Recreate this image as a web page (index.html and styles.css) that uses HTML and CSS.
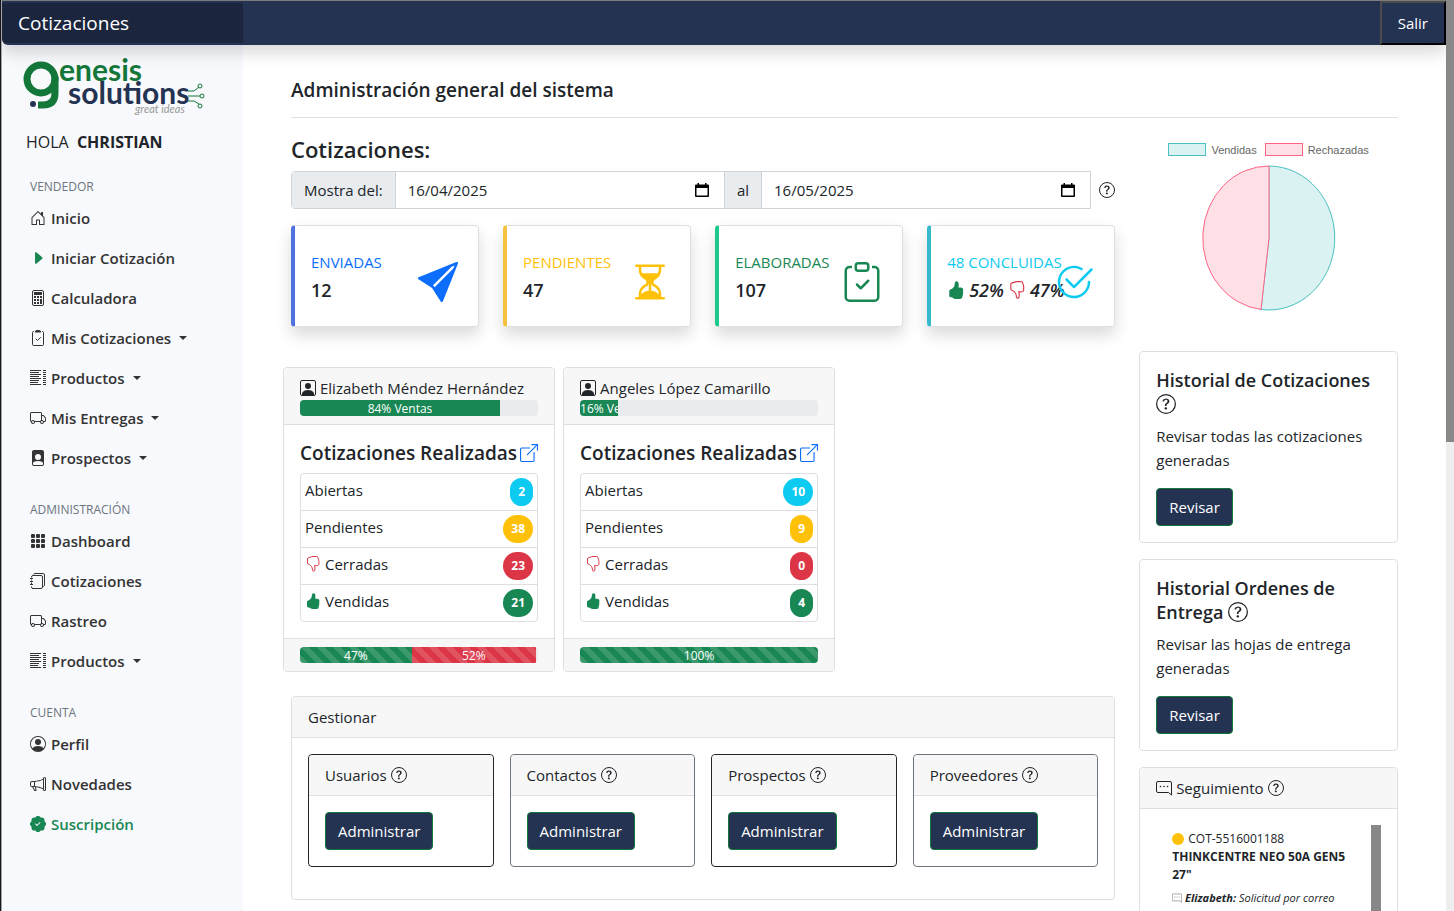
FILE: index.html
```html
<!DOCTYPE html>
<html lang="es">
<head>
  <meta charset="UTF-8" />
  <meta name="viewport" content="width=device-width, initial-scale=1.0" />
  <title>Cotizaciones</title>
  <link rel="stylesheet" href="styles.css">
</head>
<body>
  <!-- Icons -->
  <svg class="sprite" aria-hidden="true">
    <symbol id="house" viewBox="0 0 16 16"><path d="M8.354 1.146a.5.5 0 0 0-.708 0l-6 6A.5.5 0 0 0 1.5 7.5v7a.5.5 0 0 0 .5.5h4.500a.5.5 0 0 0 .5-.5v-4h2v4a.5.5 0 0 0 .5.5H14a.5.5 0 0 0 .5-.5v-7a.5.5 0 0 0-.146-.354L13 5.793V2.500a.5.5 0 0 0-.5-.5h-1a.5.5 0 0 0-.5.5v1.293L8.354 1.146zM2.500 14V7.707l5.500-5.500 5.500 5.500V14H10v-4a.5.5 0 0 0-.5-.5h-3a.5.5 0 0 0-.5.5v4H2.500z"/></symbol>
    <symbol id="caret" viewBox="0 0 16 16"><path d="m12.140 8.753-5.482 4.796c-.646.566-1.658.106-1.658-.753V3.204a1 1 0 0 1 1.659-.753l5.480 4.796a1 1 0 0 1 0 1.506z"/></symbol>
    <symbol id="calculator" viewBox="0 0 16 16"><rect x="2.500" y=".5" width="11" height="15" rx="1.500" fill="none" stroke="currentColor"/><path d="M4 2h8v3H4zM4 6h2v2H4zM7 6h2v2H7zM10 6h2v2h-2zM4 9h2v2H4zM7 9h2v2H7zM10 9h2v5h-2zM4 12h2v2H4zM7 12h2v2H7z"/></symbol>
    <symbol id="clipboard-small" viewBox="0 0 16 16"><path d="M4 1.500h-.5a1 1 0 0 0-1 1v12a1 1 0 0 0 1 1h9a1 1 0 0 0 1-1v-12a1 1 0 0 0-1-1H12" fill="none" stroke="currentColor"/><path d="M5 1.500A1 1 0 0 1 6 .5a2.500 2.500 0 0 1 4 0 1 1 0 0 1 1 1V2.500H5z"/><path d="m6 9 1.500 1.500 3-3" fill="none" stroke="currentColor" stroke-linecap="round"/></symbol>
    <symbol id="clipboard" viewBox="0 0 16 16"><path d="M10.854 7.146a.5.5 0 0 1 0 .708l-3 3a.5.5 0 0 1-.708 0l-1.500-1.500a.5.5 0 1 1 .708-.708L7.500 9.793l2.646-2.647a.5.5 0 0 1 .708 0z"/><path d="M4 1.500H3a2 2 0 0 0-2 2V14a2 2 0 0 0 2 2h10a2 2 0 0 0 2-2V3.500a2 2 0 0 0-2-2h-1v1h1a1 1 0 0 1 1 1V14a1 1 0 0 1-1 1H3a1 1 0 0 1-1-1V3.500a1 1 0 0 1 1-1h1v-1z"/><path d="M9.500 1a.5.5 0 0 1 .5.5v1a.5.5 0 0 1-.5.5h-3a.5.5 0 0 1-.5-.5v-1a.5.5 0 0 1 .5-.5h3zm-3-1A1.500 1.500 0 0 0 5 1.500v1A1.500 1.500 0 0 0 6.500 4h3A1.500 1.500 0 0 0 11 2.500v-1A1.500 1.500 0 0 0 9.500 0h-3z"/></symbol>
    <symbol id="lines" viewBox="0 0 16 16"><path d="M0 .5h11M0 2.500h9M0 4.500h11M0 6.500h9M0 8.500h11M0 10.500h9M0 12.500h8M0 14.500h11M13 .5h3M13 2.500h3M13 4.500h3M13 6.500h3M13 8.500h3M13 10.500h3M13 12.500h3M13 14.500h3" fill="none" stroke="currentColor"/></symbol>
    <symbol id="truck" viewBox="0 0 16 16"><path d="M0 3.500A1.500 1.500 0 0 1 1.500 2h9A1.500 1.500 0 0 1 12 3.500V5h1.020a1.500 1.500 0 0 1 1.170.563l1.481 1.850a1.500 1.500 0 0 1 .329.938V10.500a1.500 1.500 0 0 1-1.500 1.500H14a2 2 0 1 1-4 0H5a2 2 0 1 1-3.998-.085A1.500 1.500 0 0 1 0 10.500v-7zm1.294 7.456A1.999 1.999 0 0 1 4.732 11h5.536a2.010 2.010 0 0 1 .732-.732V3.500a.5.5 0 0 0-.5-.5h-9a.5.5 0 0 0-.5.5v7a.5.5 0 0 0 .294.456zM12 10a2 2 0 0 1 1.732 1h.768a.5.5 0 0 0 .5-.5V8.350a.5.5 0 0 0-.110-.312l-1.480-1.850A.5.5 0 0 0 13.020 6H12v4zm-9 1a1 1 0 1 0 0 2 1 1 0 0 0 0-2zm9 0a1 1 0 1 0 0 2 1 1 0 0 0 0-2z"/></symbol>
    <symbol id="file-person" viewBox="0 0 16 16"><path d="M12 0H4a2 2 0 0 0-2 2v12a2 2 0 0 0 2 2h8a2 2 0 0 0 2-2V2a2 2 0 0 0-2-2zm-1 7a3 3 0 1 1-6 0 3 3 0 0 1 6 0zm-3 4c2.623 0 4.146.826 5 1.755V14a1 1 0 0 1-1 1H4a1 1 0 0 1-1-1v-1.245C3.854 11.825 5.377 11 8 11z"/></symbol>
    <symbol id="grid" viewBox="0 0 16 16"><rect x="1" y="1" width="4" height="4" rx="1"/><rect x="6" y="1" width="4" height="4" rx="1"/><rect x="11" y="1" width="4" height="4" rx="1"/><rect x="1" y="6" width="4" height="4" rx="1"/><rect x="6" y="6" width="4" height="4" rx="1"/><rect x="11" y="6" width="4" height="4" rx="1"/><rect x="1" y="11" width="4" height="4" rx="1"/><rect x="6" y="11" width="4" height="4" rx="1"/><rect x="11" y="11" width="4" height="4" rx="1"/></symbol>
    <symbol id="journals" viewBox="0 0 16 16"><path d="M1.500 4.500V4a1.500 1.500 0 0 1 1.500-1.500h8A1.500 1.500 0 0 1 12.500 4v10a1.500 1.500 0 0 1-1.500 1.500H3A1.500 1.500 0 0 1 1.500 14v-.5M1.500 6.500v1M1.500 9.500v1.500M0 5.500h3M0 8.500h3M0 11.500h3M3.500 1.500c.2-.6.700-1 1.500-1h8A1.500 1.500 0 0 1 14.500 2v10c0 .8-.5 1.500-1.500 1.500" fill="none" stroke="currentColor"/></symbol>
    <symbol id="person-circle" viewBox="0 0 16 16"><path d="M11 6a3 3 0 1 1-6 0 3 3 0 0 1 6 0z"/><path fill-rule="evenodd" d="M0 8a8 8 0 1 1 16 0A8 8 0 0 1 0 8zm8-7a7 7 0 0 0-5.468 11.370C3.242 11.226 4.805 10 8 10s4.757 1.225 5.468 2.370A7 7 0 0 0 8 1z"/></symbol>
    <symbol id="megaphone" viewBox="0 0 16 16"><path d="M13 2.500a1.500 1.500 0 0 1 3 0v11a1.500 1.500 0 0 1-3 0v-.214c-2.162-1.241-4.490-1.843-6.912-2.083l.405 2.712A1 1 0 0 1 5.510 15.100h-.548a1 1 0 0 1-.916-.599l-1.850-3.490a68.140 68.140 0 0 0-.202-.003A2.014 2.014 0 0 1 0 9V7a2.020 2.020 0 0 1 1.992-2.013 74.663 74.663 0 0 0 2.483-.075c3.043-.154 6.148-.849 8.525-2.199V2.500zm1 0v11a.5.5 0 0 0 1 0v-11a.5.5 0 0 0-1 0zm-1 1.350c-2.344 1.205-5.209 1.842-8 2.033v4.233c.180.010.359.022.537.036 2.568.189 5.093.744 7.463 1.993V3.850zm-9 6.215v-4.130a95.090 95.090 0 0 1-1.992.052A1.020 1.020 0 0 0 1 7v2c0 .550.448 1.002 1.006 1.009A60.490 60.490 0 0 1 4 10.065zm-.657.975 1.609 3.037.010.024h.548l-.002-.014-.443-2.966a68.019 68.019 0 0 0-1.722-.082z"/></symbol>
    <symbol id="patch" viewBox="0 0 16 16"><path d="M10.067.870a2.890 2.890 0 0 0-4.134 0l-.622.638-.890-.011a2.890 2.890 0 0 0-2.924 2.924l.010.890-.636.622a2.890 2.890 0 0 0 0 4.134l.637.622-.011.890a2.890 2.890 0 0 0 2.924 2.924l.890-.010.622.636a2.890 2.890 0 0 0 4.134 0l.622-.637.890.011a2.890 2.890 0 0 0 2.924-2.924l-.010-.890.636-.622a2.890 2.890 0 0 0 0-4.134l-.637-.622.011-.890a2.890 2.890 0 0 0-2.924-2.924l-.890.010-.622-.636zm.287 5.984-3 3a.5.5 0 0 1-.708 0l-1.500-1.500a.5.5 0 1 1 .708-.708L7 8.793l2.646-2.647a.5.5 0 0 1 .708.708z"/></symbol>
    <symbol id="help" viewBox="0 0 16 16"><circle cx="8" cy="8" r="7.500" fill="none" stroke="currentColor"/><path d="M5.255 5.786a.237.237 0 0 0 .241.247h.825c.138 0 .248-.113.266-.250.090-.656.540-1.134 1.342-1.134.686 0 1.314.343 1.314 1.168 0 .635-.374.927-.965 1.371-.673.489-1.206 1.060-1.168 1.987l.003.217a.250.250 0 0 0 .250.246h.811a.250.250 0 0 0 .250-.250v-.105c0-.718.273-.927 1.010-1.486.609-.463 1.244-.977 1.244-2.056 0-1.511-1.276-2.241-2.673-2.241-1.267 0-2.655.590-2.750 2.286zm1.557 5.763c0 .533.425.927 1.010.927.609 0 1.028-.394 1.028-.927 0-.552-.420-.940-1.029-.940-.584 0-1.009.388-1.009.940z"/></symbol>
    <symbol id="send" viewBox="0 0 16 16"><path d="M15.964.686a.5.5 0 0 0-.650-.650L.767 5.855H.766l-.452.180a.5.5 0 0 0-.082.887l.410.260.001.002 4.995 3.178 3.178 4.995.002.002.260.410a.5.5 0 0 0 .886-.083l6-15Zm-1.833 1.890L6.637 10.070l-.215-.338a.5.5 0 0 0-.154-.154l-.338-.215 7.494-7.494 1.178-.471-.470 1.178Z"/></symbol>
    <symbol id="hourglass" viewBox="0 0 16 16"><path d="M2.500 15a.5.5 0 1 1 0-1h1v-1a4.500 4.500 0 0 1 2.557-4.060c.290-.139.443-.377.443-.590v-.7c0-.213-.154-.451-.443-.590A4.500 4.500 0 0 1 3.500 3V2h-1a.5.5 0 0 1 0-1h11a.5.5 0 0 1 0 1h-1v1a4.500 4.500 0 0 1-2.557 4.060c-.290.139-.443.377-.443.590v.7c0 .213.154.451.443.590A4.500 4.500 0 0 1 12.500 13v1h1a.5.5 0 0 1 0 1h-11zm2-13v1c0 .537.120 1.045.337 1.500h6.326c.216-.455.337-.963.337-1.500V2h-7zm3 6.350c0 .701-.478 1.236-1.011 1.492A3.500 3.500 0 0 0 4.500 13s.866-1.299 3-1.480V8.350zm1 0v3.170c2.134.181 3 1.480 3 1.480a3.500 3.500 0 0 0-1.989-3.158C8.978 9.586 8.500 9.052 8.500 8.351z"/></symbol>
    <symbol id="check-circle" viewBox="0 0 16 16"><path d="M2.500 8a5.500 5.500 0 0 1 8.250-4.764.5.5 0 0 0 .5-.866A6.500 6.500 0 1 0 14.500 8a.5.5 0 0 0-1 0 5.500 5.500 0 1 1-11 0z"/><path d="M15.354 3.354a.5.5 0 0 0-.708-.708L8 9.293 5.354 6.646a.5.5 0 1 0-.708.708l3 3a.5.5 0 0 0 .708 0l7-7z"/></symbol>
    <symbol id="thumb-up" viewBox="0 0 16 16"><path d="M6.956 1.745C7.021.810 7.908.087 8.864.325l.261.066c.463.116.874.456 1.012.965.220.816.533 2.511.062 4.510a9.840 9.840 0 0 1 .443-.051c.713-.065 1.669-.072 2.516.210.518.173.994.681 1.200 1.273.184.532.160 1.162-.234 1.733.058.119.103.242.138.363.077.270.113.567.113.856 0 .289-.036.586-.113.856-.039.135-.090.273-.160.404.169.387.107.819-.003 1.148a3.163 3.163 0 0 1-.488.901c.054.152.076.312.076.465 0 .305-.089.625-.253.912C13.100 15.522 12.437 16 11.500 16H8c-.605 0-1.070-.081-1.466-.218a4.826 4.826 0 0 1-.970-.484l-.048-.030c-.504-.307-.999-.609-2.068-.722C2.682 14.464 2 13.846 2 13V9c0-.850.685-1.432 1.357-1.616.849-.231 1.574-.786 2.132-1.410.560-.626.914-1.279 1.039-1.638.199-.575.356-1.540.428-2.590z"/></symbol>
    <symbol id="thumb-down" viewBox="0 0 16 16"><path d="M8.800 15.200c.6-.1 1-.5 1-1 .3-1.500.3-2.800-.2-4.700 1.200.2 2.300.2 3.300-.1 1-.4 1.300-1.500.8-2.400.5-.7.400-1.500 0-2.100.3-.8.1-1.500-.5-2.100.1-1.300-.5-2.200-1.700-2.300H8c-1.900 0-2.100.9-4.500 1.200-.6.100-1 .6-1 1.300v4c0 .6.400 1 1 1.200 1.900.5 3.100 2.200 3.600 3.500.3.900.3 2 .4 2.700.1.500.7.900 1.300.8z" fill="none" stroke="currentColor"/></symbol>
    <symbol id="person-square" viewBox="0 0 16 16"><rect x=".5" y=".5" width="15" height="15" rx="1.500" fill="none" stroke="currentColor"/><circle cx="8" cy="6" r="3"/><path d="M2 15v-1c0-1 1-4 6-4s6 3 6 4v1z"/></symbol>
    <symbol id="external" viewBox="0 0 16 16"><path d="M8.500 3.500h-7a1 1 0 0 0-1 1v10a1 1 0 0 0 1 1h10a1 1 0 0 0 1-1v-7M10.500.5h5v5M15.500.5 6.500 9.500" fill="none" stroke="currentColor" stroke-linecap="round" stroke-linejoin="round"/></symbol>
    <symbol id="chat" viewBox="0 0 16 16"><path d="M2 1.500h12A1.500 1.500 0 0 1 15.500 3v12l-3-2.500H2A1.500 1.500 0 0 1 .5 11V3A1.500 1.500 0 0 1 2 1.500z" fill="none" stroke="currentColor" stroke-linejoin="round"/><circle cx="4.500" cy="6.500" r=".8"/><circle cx="8" cy="6.500" r=".8"/><circle cx="11.500" cy="6.500" r=".8"/></symbol>
    <symbol id="calendar" viewBox="0 0 16 16"><path fill-rule="evenodd" d="M3.500 1H5v1.500h6V1h1.500v1.500H14a1 1 0 0 1 1 1V14a1 1 0 0 1-1 1H2a1 1 0 0 1-1-1V3.500a1 1 0 0 1 1-1h1.500zM2.500 6v7.500h11V6z"/></symbol>
  </svg>

  <div class="page">
    <header class="navbar">
      <a class="brand" href="#">Cotizaciones</a>
      <button class="logout" type="button">Salir</button>
    </header>

    <div class="layout">
      <nav class="sidebar">
        <svg class="logo" viewBox="0 0 184 56" role="img" aria-label="Genesis Solutions, great ideas">
          <g fill="none" stroke="#14773a" stroke-width="7">
            <circle cx="18" cy="19" r="14"/>
            <path d="M32 17v16q0 12-12 12h-5"/>
          </g>
          <circle cx="10" cy="44" r="3" fill="#253353"/>
          <text class="logo-top" x="36" y="21">enesis</text>
          <text class="logo-mid" x="45" y="44">solutions</text>
          <text class="logo-tag" x="112" y="53">great ideas</text>
          <g fill="none" stroke="#14773a">
            <path d="M165 31h6l5-4M165 36h12M165 41h6l5 3"/>
            <circle cx="177" cy="26" r="2"/>
            <circle cx="179" cy="36" r="2"/>
            <circle cx="177" cy="46" r="2"/>
          </g>
        </svg>
        <p class="hello">HOLA <b>CHRISTIAN</b></p>

        <h6>VENDEDOR</h6>
        <ul>
          <li><a href="#"><svg class="icon"><use href="#house"/></svg>Inicio</a></li>
          <li><a href="#"><svg class="icon green"><use href="#caret"/></svg>Iniciar Cotización</a></li>
          <li><a href="#"><svg class="icon"><use href="#calculator"/></svg>Calculadora</a></li>
          <li><a class="dropdown" href="#"><svg class="icon"><use href="#clipboard-small"/></svg>Mis Cotizaciones</a></li>
          <li><a class="dropdown" href="#"><svg class="icon"><use href="#lines"/></svg>Productos</a></li>
          <li><a class="dropdown" href="#"><svg class="icon"><use href="#truck"/></svg>Mis Entregas</a></li>
          <li><a class="dropdown" href="#"><svg class="icon"><use href="#file-person"/></svg>Prospectos</a></li>
        </ul>

        <h6>ADMINISTRACIÓN</h6>
        <ul>
          <li><a href="#"><svg class="icon"><use href="#grid"/></svg>Dashboard</a></li>
          <li><a href="#"><svg class="icon"><use href="#journals"/></svg>Cotizaciones</a></li>
          <li><a href="#"><svg class="icon"><use href="#truck"/></svg>Rastreo</a></li>
          <li><a class="dropdown" href="#"><svg class="icon"><use href="#lines"/></svg>Productos</a></li>
        </ul>

        <h6>CUENTA</h6>
        <ul>
          <li><a href="#"><svg class="icon"><use href="#person-circle"/></svg>Perfil</a></li>
          <li><a href="#"><svg class="icon"><use href="#megaphone"/></svg>Novedades</a></li>
          <li><a class="green" href="#"><svg class="icon"><use href="#patch"/></svg>Suscripción</a></li>
        </ul>
      </nav>

      <main>
        <h1>Administración general del sistema</h1>

        <div class="row">
          <div class="col-main">
            <h2>Cotizaciones:</h2>
            <div class="dates">
              <div class="input-group">
                <label for="from">Mostra del:</label>
                <div class="date"><input type="text" id="from" value="16/04/2025"><svg class="icon"><use href="#calendar"/></svg></div>
                <label for="to">al</label>
                <div class="date"><input type="text" id="to" value="16/05/2025"><svg class="icon"><use href="#calendar"/></svg></div>
              </div>
              <svg class="icon"><use href="#help"/></svg>
            </div>

            <div class="stats">
              <div class="stat blue">
                <div><p>ENVIADAS</p><strong>12</strong></div>
                <svg class="icon"><use href="#send"/></svg>
              </div>
              <div class="stat yellow">
                <div><p>PENDIENTES</p><strong>47</strong></div>
                <svg class="icon"><use href="#hourglass"/></svg>
              </div>
              <div class="stat teal">
                <div><p>ELABORADAS</p><strong>107</strong></div>
                <svg class="icon"><use href="#clipboard"/></svg>
              </div>
              <div class="stat cyan">
                <div>
                  <p>48 CONCLUIDAS</p>
                  <strong class="rates"><svg class="icon green"><use href="#thumb-up"/></svg><i>52%</i><svg class="icon red"><use href="#thumb-down"/></svg><i>47%</i></strong>
                </div>
                <svg class="icon"><use href="#check-circle"/></svg>
              </div>
            </div>

            <div class="sellers">
              <div class="card">
                <div class="card-header">
                  <div class="seller-name"><svg class="icon"><use href="#person-square"/></svg>Elizabeth Méndez Hernández</div>
                  <div class="progress"><div class="bar" style="width: 84%">84% Ventas</div></div>
                </div>
                <div class="card-body">
                  <h5>Cotizaciones Realizadas <a href="#" aria-label="Abrir"><svg class="icon"><use href="#external"/></svg></a></h5>
                  <ul class="list">
                    <li>Abiertas <span class="badge bg-cyan">2</span></li>
                    <li>Pendientes <span class="badge bg-yellow">38</span></li>
                    <li><svg class="icon red"><use href="#thumb-down"/></svg>Cerradas <span class="badge bg-red">23</span></li>
                    <li><svg class="icon green"><use href="#thumb-up"/></svg>Vendidas <span class="badge bg-green">21</span></li>
                  </ul>
                </div>
                <div class="card-footer">
                  <div class="progress">
                    <div class="bar striped" style="width: 47%">47%</div>
                    <div class="bar striped bg-red" style="width: 52%">52%</div>
                  </div>
                </div>
              </div>
              <div class="card">
                <div class="card-header">
                  <div class="seller-name"><svg class="icon"><use href="#person-square"/></svg>Angeles López Camarillo</div>
                  <div class="progress"><div class="bar" style="width: 16%">16% Ventas</div></div>
                </div>
                <div class="card-body">
                  <h5>Cotizaciones Realizadas <a href="#" aria-label="Abrir"><svg class="icon"><use href="#external"/></svg></a></h5>
                  <ul class="list">
                    <li>Abiertas <span class="badge bg-cyan">10</span></li>
                    <li>Pendientes <span class="badge bg-yellow">9</span></li>
                    <li><svg class="icon red"><use href="#thumb-down"/></svg>Cerradas <span class="badge bg-red">0</span></li>
                    <li><svg class="icon green"><use href="#thumb-up"/></svg>Vendidas <span class="badge bg-green">4</span></li>
                  </ul>
                </div>
                <div class="card-footer">
                  <div class="progress"><div class="bar striped" style="width: 100%">100%</div></div>
                </div>
              </div>
            </div>

            <div class="card">
              <div class="card-header">Gestionar</div>
              <div class="card-body manage">
                <div class="card dark">
                  <div class="card-header">Usuarios <svg class="icon"><use href="#help"/></svg></div>
                  <div class="card-body"><button class="btn" type="button">Administrar</button></div>
                </div>
                <div class="card gray">
                  <div class="card-header">Contactos <svg class="icon"><use href="#help"/></svg></div>
                  <div class="card-body"><button class="btn" type="button">Administrar</button></div>
                </div>
                <div class="card dark">
                  <div class="card-header">Prospectos <svg class="icon"><use href="#help"/></svg></div>
                  <div class="card-body"><button class="btn" type="button">Administrar</button></div>
                </div>
                <div class="card gray">
                  <div class="card-header">Proveedores <svg class="icon"><use href="#help"/></svg></div>
                  <div class="card-body"><button class="btn" type="button">Administrar</button></div>
                </div>
              </div>
            </div>
          </div>

          <div class="col-side">
            <div class="chart">
              <div class="legend">
                <span><i class="key sold"></i>Vendidas</span>
                <span><i class="key lost"></i>Rechazadas</span>
              </div>
              <svg class="pie" viewBox="0 0 134 146">
                <path d="M67 73V1A66 72 0 1 1 59 144.500z" fill="#dbf2f2" stroke="#4bc0c0"/>
                <path d="M67 73V1A66 72 0 0 0 59 144.500z" fill="#ffe0e6" stroke="#ff6384"/>
              </svg>
            </div>

            <div class="card">
              <div class="card-body">
                <h5>Historial de Cotizaciones <svg class="icon"><use href="#help"/></svg></h5>
                <p>Revisar todas las cotizaciones generadas</p>
                <button class="btn" type="button">Revisar</button>
              </div>
            </div>
            <div class="card">
              <div class="card-body">
                <h5>Historial Ordenes de Entrega <svg class="icon"><use href="#help"/></svg></h5>
                <p>Revisar las hojas de entrega generadas</p>
                <button class="btn" type="button">Revisar</button>
              </div>
            </div>
            <div class="card">
              <div class="card-header"><svg class="icon"><use href="#chat"/></svg> Seguimiento <svg class="icon"><use href="#help"/></svg></div>
              <div class="card-body follow">
                <div class="follow-item">
                  <div class="code"><span class="dot"></span>COT-5516001188</div>
                  <b>THINKCENTRE NEO 50A GEN5 27"</b>
                  <em><svg class="icon"><use href="#chat"/></svg> <b>Elizabeth:</b> Solicitud por correo</em>
                </div>
                <div class="follow-scroll"></div>
              </div>
            </div>
          </div>
        </div>
      </main>
    </div>
  </div>
  <div class="scrollbar"><div class="thumb"></div></div>
</body>
</html>
```
FILE: styles.css
```css
* { box-sizing: border-box; }
body {
  margin: 0;
  height: 100vh;
  display: flex;
  overflow: hidden;
  border-left: 1px solid #16161c;
  font-family: "Open Sans", "Noto Sans", sans-serif;
  font-size: 15px;
  line-height: 24px;
  color: #212529;
}
h1, h2, h5, h6, p, ul { margin: 0; padding: 0; font-weight: 600; }
p { font-weight: 400; }
ul { list-style: none; font-weight: 400; }
a { color: #0d6efd; text-decoration: none; }
button, input { font: inherit; }

.sprite { position: absolute; width: 0; height: 0; }
.icon { width: 16px; height: 16px; flex: none; fill: currentColor; vertical-align: -2px; }
.green { color: #198754; }
.red { color: #dc3545; }
.bg-cyan { background-color: #0dcaf0; }
.bg-yellow { background-color: #ffc107; }
.bg-red { background-color: #dc3545; }
.bg-green { background-color: #198754; }

.page {
  flex: 1;
  min-width: 0;
  display: flex;
  flex-direction: column;
  border-left: 1px solid #a5a5a5;
  border-top: 1px solid #7c7c7c;
  overflow: hidden;
}
.scrollbar { width: 8px; background: #eee; }
.thumb { height: 442px; background: #888; }

/* Top bar */
.navbar {
  position: relative;
  z-index: 1;
  display: flex;
  flex: none;
  justify-content: space-between;
  height: 44px;
  background: #253353;
  border-radius: 0 0 0 6px;
  box-shadow: 0 8px 16px rgba(0, 0, 0, .15);
}
.brand {
  width: 241px;
  margin: 2px 0;
  padding: 0 16px;
  background: rgba(0, 0, 0, .25);
  border-radius: 0 0 0 4px;
  color: #fff;
  font-size: 19px;
  line-height: 40px;
}
.logout {
  padding: 0 16px;
  background: #253353;
  border: 2px solid #000;
  border-top-color: #4c4c4c;
  border-left-color: #4c4c4c;
  color: #fff;
  font-weight: 500;
}

.layout { display: flex; flex: 1; min-height: 0; }

/* Sidebar */
.sidebar { flex: none; width: 241px; padding: 15px 28px; background: #f8f9fc; }
.logo { display: block; width: 184px; height: 56px; margin-left: -7px; overflow: visible; }
.logo text { font-family: Lato, sans-serif; }
.logo-top { font-size: 30px; font-weight: 700; fill: #14773a; }
.logo-mid { font-size: 30px; font-weight: 700; fill: #253353; }
.logo-tag { font-size: 11px; font-style: italic; fill: #999; }
.hello { margin: 14px -4px 23px; font-size: 16px; }
.hello b { margin-left: 4px; }
.sidebar h6 { margin-bottom: 1px; font-size: 12px; line-height: 20px; font-weight: 400; color: #6c757d; }
.sidebar ul { margin-bottom: 22px; }
.sidebar li a { display: flex; align-items: center; gap: 5px; height: 40px; color: #333; font-weight: 600; white-space: nowrap; }
.sidebar li a.green { color: #198754; }
.sidebar .icon.green { color: #198754; }
.dropdown::after { content: ""; margin-left: 3px; border: 4px solid transparent; border-top-color: #333; border-bottom: 0; }

/* Content */
main { flex: 1; min-width: 0; padding: 33px 48px 0; }
h1 { padding-bottom: 15px; margin-bottom: 16px; border-bottom: 1px solid #dee2e6; font-size: 19px; }
h2 { margin-bottom: 7px; font-size: 22px; line-height: 30px; }
h5 { margin-bottom: 8px; font-size: 18px; }
h5 .icon { width: 20px; height: 20px; vertical-align: -3px; }
.row { display: flex; margin: 0 -12px; }
.col-main { width: 75%; padding: 0 12px; }
.col-side { width: 25%; padding: 0 12px; }

.dates { display: flex; align-items: center; gap: 8px; margin-bottom: 16px; }
.input-group { flex: 1; display: flex; height: 38px; border: 1px solid #ced4da; border-radius: 4px 0 0 4px; }
.input-group label { padding: 6px 12px; background: #e9ecef; border-right: 1px solid #ced4da; }
.date { flex: 1; display: flex; align-items: center; padding: 0 14px 0 12px; }
.date + label { border-left: 1px solid #ced4da; }
.date input { flex: 1; width: 0; padding: 0; border: 0; outline: 0; color: #212529; background: none; }
.date .icon { color: #000; }

.stats { display: grid; grid-template-columns: repeat(4, minmax(0, 1fr)); gap: 24px; margin-bottom: 40px; }
.stat {
  display: flex;
  justify-content: space-between;
  align-items: flex-end;
  padding: 24px 20px 24px 16px;
  border: 1px solid #dfdfdf;
  border-left: 4px solid;
  border-radius: 4px;
  box-shadow: 0 8px 16px rgba(0, 0, 0, .15);
}
.stat div { min-width: 0; white-space: nowrap; }
.stat p { margin-bottom: 4px; }
.stat strong { display: block; font-size: 18px; font-weight: 600; color: #212529; }
.stat > .icon { width: 40px; height: 40px; }
.stat.blue { color: #0d6efd; border-left-color: #4e73df; }
.stat.yellow { color: #ffc107; border-left-color: #f6c23e; }
.stat.teal { color: #198754; border-left-color: #1cc88a; }
.stat.cyan { color: #0dcaf0; border-left-color: #36b9cc; }
.stat .rates { display: flex; align-items: center; gap: 4px; }
.rates .icon { width: 18px; height: 18px; }

.card { border: 1px solid #dfdfdf; border-radius: 4px; background: #fff; }
.card-header { padding: 8px 16px; background: #f7f7f7; border-bottom: 1px solid #dfdfdf; border-radius: 4px 4px 0 0; }
.card-body { padding: 16px; }
.card-footer { padding: 8px 16px; background: #f7f7f7; border-top: 1px solid #dfdfdf; border-radius: 0 0 4px 4px; }

.sellers { display: grid; grid-template-columns: repeat(3, minmax(0, 1fr)); gap: 8px; margin: 0 0 24px -8px; }
.seller-name { display: flex; align-items: center; gap: 4px; white-space: nowrap; }
.sellers h5 { display: flex; justify-content: space-between; align-items: center; font-size: 19px; white-space: nowrap; }
.sellers h5 .icon { display: block; width: 18px; height: 18px; }
.progress { display: flex; height: 16px; overflow: hidden; background: #e9ecef; border-radius: 4px; }
.bar { overflow: hidden; background-color: #198754; color: #fff; font-size: 12px; line-height: 17px; text-align: center; white-space: nowrap; }
.bar.bg-red { background-color: #dc3545; }
.striped {
  background-image: linear-gradient(45deg, rgba(255, 255, 255, .15) 25%, transparent 25%, transparent 50%, rgba(255, 255, 255, .15) 50%, rgba(255, 255, 255, .15) 75%, transparent 75%, transparent);
  background-size: 16px 16px;
}
.list { border: 1px solid #dfdfdf; border-radius: 4px; }
.list li { display: flex; align-items: flex-start; gap: 4px; height: 37px; padding: 4px 4px 0; }
.list li:first-child { height: 36px; }
.list li + li { border-top: 1px solid #dfdfdf; }
.list .icon { margin-top: 4px; }
.badge { margin-left: auto; padding: 0 8px; border-radius: 16px; color: #fff; font-size: 12px; font-weight: 700; line-height: 28px; }

.manage { display: grid; grid-template-columns: repeat(4, minmax(0, 1fr)); gap: 16px; padding-bottom: 32px; }
.card.dark { border-color: #212529; }
.card.gray { border-color: #6c757d; }
.btn { display: block; height: 38px; padding: 0 12px; background: #253353; border: 1px solid #14773a; border-radius: 4px; color: #fff; }

/* Right column */
.col-side .card { margin-bottom: 16px; }
.col-side p { margin-bottom: 16px; }
.chart { height: 217px; padding-top: 9px; font-family: "Liberation Sans", Arial, sans-serif; font-size: 11px; line-height: 12px; color: #666; }
.legend { display: flex; justify-content: center; gap: 8px; }
.legend span { display: flex; align-items: center; gap: 5px; }
.key { width: 38px; height: 13px; border: 1px solid; }
.sold { background: #dbf2f2; border-color: #4bc0c0; }
.lost { background: #ffe0e6; border-color: #ff6384; }
.pie { display: block; width: 134px; height: 146px; margin: 9px auto 0; }

.follow { display: flex; height: 240px; }
.follow-item { flex: 1; padding: 4px 16px; font-size: 12px; line-height: 19px; }
.follow-item > b { display: block; line-height: 18px; }
.code { display: flex; align-items: center; gap: 4px; }
.dot { width: 12px; height: 12px; border-radius: 50%; background: #ffc107; }
.follow-item em { display: block; margin-top: 4px; font-size: 11px; white-space: nowrap; }
.follow-item .icon { width: 10px; height: 10px; vertical-align: -1px; color: #777; }
.follow-scroll { width: 10px; background: #888; }
```
